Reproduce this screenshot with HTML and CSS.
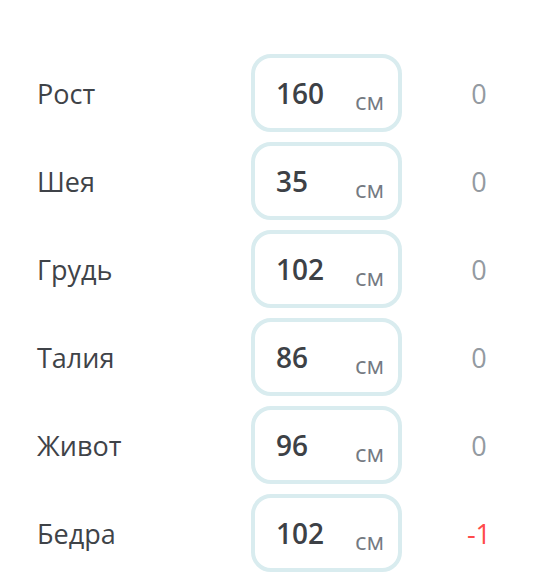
FILE: index.html
```html
<!DOCTYPE html>
<html lang="ru">
<head>
<meta charset="utf-8">
<link rel="stylesheet" href="styles.css">
</head>
<body>
<div class="list">
  <div class="row"><div class="label">Рост</div><div class="field"><span class="num">160</span><span class="unit">см</span></div><div class="diff">0</div></div>
  <div class="row"><div class="label">Шея</div><div class="field"><span class="num">35</span><span class="unit">см</span></div><div class="diff">0</div></div>
  <div class="row"><div class="label">Грудь</div><div class="field"><span class="num">102</span><span class="unit">см</span></div><div class="diff">0</div></div>
  <div class="row"><div class="label">Талия</div><div class="field"><span class="num">86</span><span class="unit">см</span></div><div class="diff">0</div></div>
  <div class="row"><div class="label">Живот</div><div class="field"><span class="num">96</span><span class="unit">см</span></div><div class="diff">0</div></div>
  <div class="row"><div class="label">Бедра</div><div class="field"><span class="num">102</span><span class="unit">см</span></div><div class="diff neg">-1</div></div>
</div>
</body>
</html>
```
FILE: styles.css
```css
html, body {
  margin: 0;
  padding: 0;
  background: #ffffff;
}
body {
  font-family: "Open Sans", "Noto Sans", sans-serif;
}
.list {
  display: flex;
  flex-direction: column;
  gap: 10px;
  padding: 54px 0 0 37px;
}
.row {
  display: grid;
  grid-template-columns: 214px 151px 110px;
  align-items: center;
  height: 78px;
}
.label {
  font-size: 27px;
  color: #3f4348;
}
.field {
  box-sizing: border-box;
  height: 78px;
  border: 4px solid #d9ecef;
  border-radius: 20px;
  display: flex;
  align-items: center;
  padding: 0 14px 0 21px;
}
.num {
  font-size: 28px;
  font-weight: 600;
  color: #3d4146;
  flex: 1;
  margin-top: -1px;
}
.unit {
  font-size: 24px;
  color: #747a82;
  margin-top: 14px;
}
.diff {
  text-align: center;
  font-size: 27px;
  color: #939aa1;
  padding-left: 44px;
}
.diff.neg {
  color: #ff4b4b;
}
```
